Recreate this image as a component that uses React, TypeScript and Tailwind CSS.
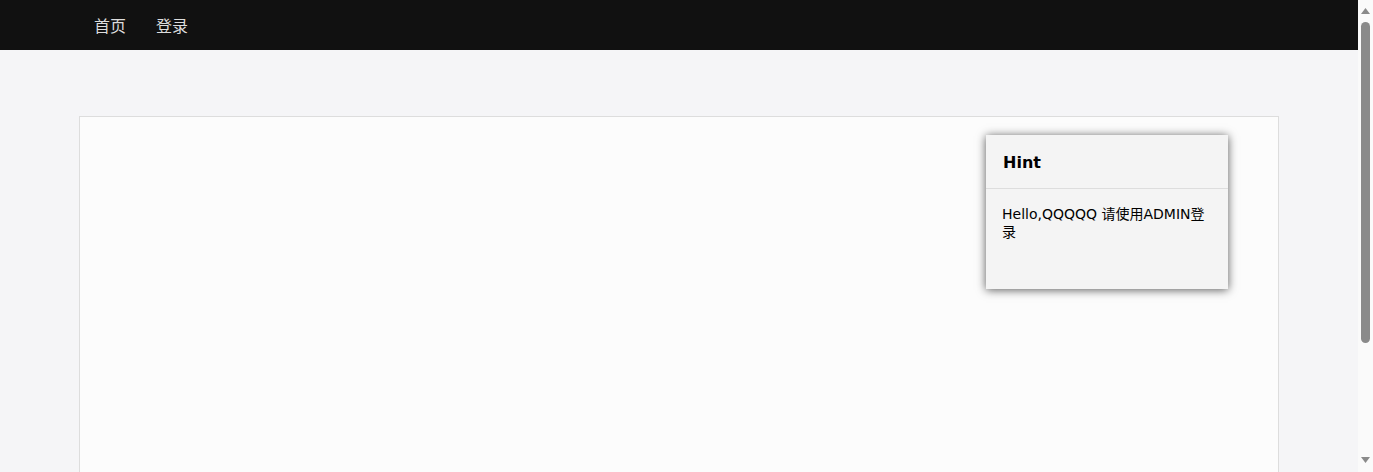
import React from 'react';

function Scrollbar() {
  return (
    <aside className="w-[15px] h-full bg-[#fafafa] flex flex-col items-center pt-[8px] pb-[9px]">
      <svg width="9" height="6" viewBox="0 0 9 6">
        <path d="M4.5 0 L9 6 L0 6 Z" fill="#8a8a8a" />
      </svg>
      <div className="mt-[8px] w-[9px] h-[321px] rounded-full bg-[#8a8a8a] ml-[-1px]" />
      <div className="flex-1" />
      <svg width="9" height="6" viewBox="0 0 9 6">
        <path d="M0 0 L9 0 L4.5 6 Z" fill="#8a8a8a" />
      </svg>
    </aside>
  );
}

export default function App() {
  return (
    <div className="h-[472px] flex overflow-hidden bg-[#f5f5f7] font-['DejaVu_Sans','Noto_Sans_CJK_SC',sans-serif]">
      <main className="flex-1 min-w-0">
        {/* top nav */}
        <nav className="h-[50px] bg-[#111111] flex items-center pl-[94px] gap-[30px] text-[16px] text-[#dddddd] font-['Noto_Sans_CJK_SC',sans-serif]">
          <a href="#">首页</a>
          <a href="#">登录</a>
        </nav>

        <div className="pt-[66px] pb-[20px]">
          <div className="w-[1200px] mx-auto h-[540px] bg-[#fcfcfc] border border-[#dddddd] flex justify-end items-start pt-[18px] pr-[50px]">
            <div className="w-[242px] h-[154px] bg-[#f4f4f4] shadow-[0_1px_9px_rgba(0,0,0,0.65)]">
              <div className="h-[54px] pt-[2px] flex items-center px-[17px] border-b border-[#dddddd]">
                <h3 className="text-[16px] font-bold text-black">Hint</h3>
              </div>
              <p className="px-[16px] pt-[16px] text-[14px] leading-[18px] text-black">
                Hello,QQQQQ 请使用ADMIN登录
              </p>
            </div>
          </div>
        </div>
      </main>
      <Scrollbar />
    </div>
  );
}
